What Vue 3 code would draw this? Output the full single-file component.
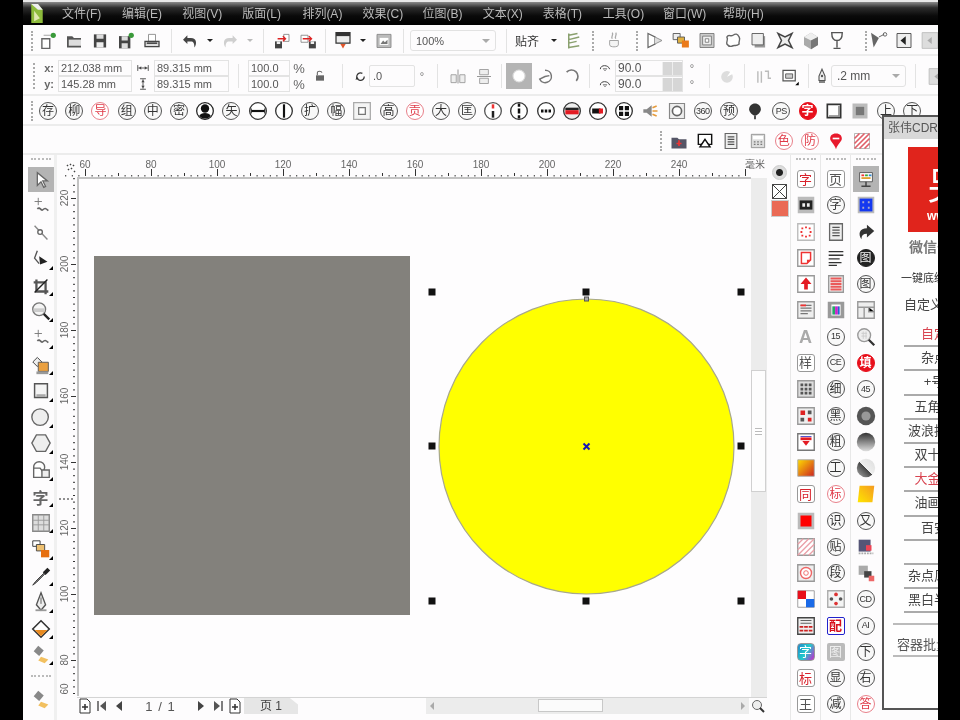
<script setup>
// menu and toolbars of the drawing program
const menus = ['文件(F)', '编辑(E)', '视图(V)', '版面(L)', '排列(A)', '效果(C)', '位图(B)', '文本(X)', '表格(T)', '工具(O)', '窗口(W)', '帮助(H)']

const svg = {
  new: '<path d="M5 10h9v11H5z" fill="#fff" stroke="#666" stroke-width="1.6"/><path d="M7 6h8" stroke="#999"/><circle cx="18" cy="6" r="3" fill="#3a9a3a"/>',
  open: '<path d="M4 7h6l2 2h8v11H4z" fill="#555"/><path d="M6 11h14v7H6z" fill="#ddd"/>',
  save: '<path d="M5 5h14v15H5z" fill="#444"/><path d="M8 5h8v5H8z" fill="#ddd"/><path d="M8 14h8v6H8z" fill="#eee"/>',
  saveas: '<path d="M4 7h13v14H4z" fill="#444"/><path d="M7 7h7v5H7zM7 15h7v6H7z" fill="#ddd"/><circle cx="18" cy="6" r="3" fill="#3a9a3a"/>',
  print: '<path d="M8 5h8v8H8z" fill="#fff" stroke="#888"/><path d="M4 13h16v6H4z" fill="#ddd" stroke="#444" stroke-width="1.5"/><path d="M6 15h12" stroke="#222" stroke-width="1.5"/>',
  undo: '<path d="M9 6 4 11l5 5v-3h4c3 0 4 2 4 7 3-4 3-11-4-11H9z" fill="#444"/>',
  redo: '<path d="M15 6l5 5-5 5v-3h-4c-3 0-4 2-4 7-3-4-3-11 4-11h4z" fill="#cfcfcf"/>',
  imp: '<path d="M4 13h8v8H4z" fill="#444"/><path d="M6 13h4v3H6z" fill="#eee"/><path d="M14 5h6v8h-6z" fill="#fff" stroke="#888"/><path d="M7 10h8M13 7l3 3-3 3" stroke="#d22" stroke-width="1.6" fill="none"/>',
  exp: '<path d="M4 6h8v8H4z" fill="#fff" stroke="#888"/><path d="M13 13h8v8h-8z" fill="#444"/><path d="M15 13h4v3h-4z" fill="#eee"/><path d="M6 10h9M13 7l3 3-3 3" stroke="#d22" stroke-width="1.6" fill="none"/>',
  pub: '<path d="M4 3h16v12H4z" fill="#eee" stroke="#333" stroke-width="1.4"/><path d="M4 3h16v4H4z" fill="#333"/><path d="M9 16h6l-3 5z" fill="#e2552a"/>',
  view: '<path d="M4 5h16v15H4z" fill="#bbb" stroke="#888"/><path d="M7 9h10v8H7z" fill="#fff"/><path d="M8 16l3-4 2 2 3-3v5z" fill="#777"/>',
  snap: '<path d="M6 4v17M6 6l10-2M6 11l12-3M6 15l9-2M6 20l12-2" stroke="#8aa06e" stroke-width="1.7" fill="none"/>',
  cup: '<path d="M7 12h10v5c0 3-10 3-10 0z" fill="#f4f4f4" stroke="#999"/><path d="M10 10c-2-3 2-4 0-7M14 10c-2-3 2-4 0-7" stroke="#aaa" stroke-width="1.5" fill="none"/>',
  blend: '<path d="M4 4l8 4v8l-8 4z" fill="#fff" stroke="#666" stroke-width="1.4"/><path d="M12 8l8 4-8 4" fill="#ddd" stroke="#888"/>',
  layers: '<path d="M3 4h8v7H3z" fill="#eee" stroke="#555"/><path d="M8 8h8v7H8z" fill="#e0b040" stroke="#555"/><path d="M13 12h8v8h-8z" fill="#ea7a1a"/>',
  contour: '<path d="M4 4h16v16H4z" fill="#ccc" stroke="#777"/><path d="M7 7h10v10H7z" fill="#eee" stroke="#777"/><path d="M10 10h4v4h-4z" fill="#fff" stroke="#777"/>',
  envelope: '<path d="M5 8c2-4 4 0 7-2s5-2 7 2c2 3-1 5 0 8-3 3-5 1-7 2s-5 1-7-2c-1-3 2-5 0-8z" fill="#fff" stroke="#666" stroke-width="1.6"/>',
  shadow: '<path d="M7 7h12v13H7z" fill="#999"/><path d="M4 4h13v13H4z" fill="#eee" stroke="#555"/>',
  distort: '<path d="M4 4l8 4 8-4-4 8 4 8-8-4-8 4 4-8z" fill="#eee" stroke="#444" stroke-width="1.7"/>',
  cube: '<path d="M12 3l8 5v9l-8 5-8-5V8z" fill="#aaa"/><path d="M12 3l8 5-8 4-8-4z" fill="#eee"/><path d="M12 12v10l8-5V8z" fill="#777"/>',
  glass: '<path d="M6 3h12c0 7-3 9-6 9s-6-2-6-9zM12 12v8M8 21h8" fill="#fff" stroke="#555" stroke-width="1.6"/>',
  lens: '<path d="M4 3l9 6-6 11z" fill="#666"/><circle cx="20" cy="5" r="2" fill="#fff" stroke="#555"/><path d="M13 8l6-3" stroke="#555"/>',
  panel: '<path d="M4 4h16v16H4z" fill="#eee" stroke="#444"/><path d="M14 7v10l-6-5z" fill="#222"/>',
  panel2: '<path d="M3 3h18v18H3z" fill="#ddd" stroke="#bbb"/><path d="M14 8v8l-5-4z" fill="#aaa"/>',
  hsize: '<path d="M3 7v10M21 7v10M4 12h16" stroke="#444" stroke-width="1.5"/><path d="M5 12l4-3v6zM19 12l-4-3v6z" fill="#444"/>',
  vsize: '<path d="M7 3h10M7 21h10M12 4v16" stroke="#444" stroke-width="1.5"/><path d="M12 5l-3 4h6zM12 19l-3-4h6z" fill="#444"/>',
  lock: '<path d="M6 11h12v8H6z" fill="#666"/><path d="M8 11V7c0-3 6-3 7 0" fill="none" stroke="#666" stroke-width="1.6"/>',
  rot: '<path d="M18 12a6 6 0 1 1-3-5" fill="none" stroke="#333" stroke-width="2"/><path d="M6 12l-2 5 5-1z" fill="#333"/>',
  mirrorh: '<path d="M12 4v16" stroke="#888"/><path d="M4 10h6v9H4zM14 10h6v9h-6z" fill="#eee" stroke="#999"/>',
  mirrorv: '<path d="M4 12h16" stroke="#888"/><path d="M7 4h10v6H7zM7 14h10v6H7z" fill="#eee" stroke="#999"/>',
  ell: '<circle cx="12" cy="12" r="5.5" fill="#fff" stroke="#ddd"/>',
  pie: '<path d="M12 5a7 7 0 1 1-6 10l6-3 5-1" fill="#fff" stroke="#777" stroke-width="1.7"/>',
  arc: '<path d="M7 17a7 7 0 0 1 10-11" transform="rotate(90 12 12)" fill="none" stroke="#777" stroke-width="1.9"/>',
  arcup: '<path d="M4 14c0-8 14-8 16 0" fill="none" stroke="#444" stroke-width="1.7"/><path d="M9 13l3 4 3-4z" fill="#fff" stroke="#444"/>',
  convert: '<circle cx="12" cy="13" r="7" fill="#ddd"/><path d="M12 13l8-4-2-5z" fill="#fff"/>',
  wrap: '<path d="M5 6v13M9 6v13M13 6h4v8h3" fill="none" stroke="#bbb" stroke-width="1.6"/>',
  frame: '<path d="M4 5h14v12H4z" fill="#fff" stroke="#555" stroke-width="1.4"/><path d="M7 9h8v5H7z" fill="#ccc" stroke="#555"/><path d="M18 22l4-4v4z" fill="#000"/>',
  pen: '<path d="M12 3l4 9v6H8v-6z" fill="#eee" stroke="#555" stroke-width="1.5"/><path d="M8 20h8" stroke="#333" stroke-width="1.6"/><circle cx="12" cy="12" r="1.6" fill="#555"/>',
  folderadd: '<path d="M3 8h7l2 2h9v11H3z" fill="#556"/><path d="M12 11v7M9 15h6" stroke="#e33" stroke-width="2"/>',
  tri: '<path d="M4 4h16v12h-4l-4-5-4 5H4z" fill="#fff" stroke="#111" stroke-width="1.7"/><path d="M12 10l6 9H6z" fill="#fff" stroke="#111" stroke-width="1.7"/>',
  lines: '<path d="M5 3h14v18H5z" fill="#eee" stroke="#666" stroke-width="1.4"/><path d="M8 7h8M8 10h8M8 13h8M8 16h8" stroke="#555" stroke-width="1.4"/>',
  calc: '<path d="M4 4h16v16H4z" fill="#ddd" stroke="#888"/><path d="M6 6h12v4H6z" fill="#fff"/><path d="M7 13h2M11 13h2M15 13h2M7 16h2M11 16h2M15 16h2" stroke="#777" stroke-width="1.6"/>',
  pin: '<path d="M12 3c-5 0-7 3-7 6 0 4 5 6 7 13 2-7 7-9 7-13 0-3-2-6-7-6z" fill="#e8192c"/><path d="M8 8h8v2H8z" fill="#fff"/>',
  hatch: '<path d="M3 3h18v18H3z" fill="#fff" stroke="#aaa"/><path d="M3 9l6-6M3 15L15 3M3 21 21 3M9 21 21 9M15 21l6-6" stroke="#e0606a" stroke-width="2"/>',
  balloon: '<path d="M12 3c-4 0-7 3-7 7s4 7 7 8c3-1 7-4 7-8s-3-7-7-7z" fill="#333"/><path d="M12 18v4" stroke="#333" stroke-width="2"/>',
  speaker: '<path d="M4 10h4l6-5v14l-6-5H4z" fill="#888"/><path d="M15 8l5-2M15 12h6M15 16l5 2" stroke="#e59a3a" stroke-width="2"/>',
  ringbox: '<path d="M3 3h18v18H3z" fill="#eee" stroke="#888" stroke-width="1.4"/><circle cx="12" cy="12" r="5.5" fill="#fff" stroke="#666" stroke-width="2"/>',
  sqframe: '<path d="M4 4h16v16H4z" fill="#fff" stroke="#333" stroke-width="2"/><path d="M18 6v12H6" fill="none" stroke="#888" stroke-width="2"/>',
  graysq: '<path d="M3 3h18v18H3z" fill="#bbb"/><path d="M7 7h10v10H7z" fill="#777"/>',
  man: '<circle cx="12" cy="12" r="10" fill="#fff" stroke="#222" stroke-width="1.5"/><circle cx="12" cy="9" r="5" fill="#111"/><path d="M5 18c2-5 12-5 14 0l-4 3H9z" fill="#111"/>',
  ringh: '<circle cx="12" cy="12" r="10" fill="#fff" stroke="#333" stroke-width="1.6"/><path d="M4 12h16" stroke="#111" stroke-width="2.6"/><path d="M4 9v6M20 9v6" stroke="#111" stroke-width="1"/>',
  ringv: '<circle cx="12" cy="12" r="10" fill="#fff" stroke="#333" stroke-width="1.6"/><path d="M12 4v16" stroke="#111" stroke-width="2.6"/>',
  ringred: '<circle cx="12" cy="12" r="10" fill="#fff" stroke="#555" stroke-width="1.6"/><path d="M12 4v5" stroke="#e33" stroke-width="3"/><path d="M12 12v8" stroke="#222" stroke-width="3"/>',
  ringbars: '<circle cx="12" cy="12" r="10" fill="#fff" stroke="#333" stroke-width="1.6"/><path d="M12 3v4M12 9v6M12 17v4" stroke="#111" stroke-width="3"/>',
  ringdots: '<circle cx="12" cy="12" r="10" fill="#fff" stroke="#333" stroke-width="1.6"/><path d="M6 12h3M10.500 12h3M15 12h3" stroke="#111" stroke-width="3.500"/>',
  ringbar: '<circle cx="12" cy="12" r="10" fill="#eee" stroke="#333" stroke-width="1.6"/><path d="M4 8h16v3H4z" fill="#222"/><path d="M4 11h16v5H4z" fill="#e31b23"/>',
  ringbox2: '<circle cx="12" cy="12" r="10" fill="#fff" stroke="#333" stroke-width="1.6"/><path d="M5 9h10v6H5z" fill="#111"/><path d="M13 9h5v6h-5z" fill="#e31b23"/>',
  ringfour: '<circle cx="12" cy="12" r="10" fill="#fff" stroke="#333" stroke-width="1.6"/><path d="M6 6h5v5H6zM13 6h5v5h-5zM6 13h5v5H6zM13 13h5v5h-5z" fill="#111"/>',
  square: '<path d="M2 2h20v20H2z" fill="#f4f4f4" stroke="#aaa" stroke-width="1.5"/><path d="M8 8h8v8H8z" fill="#fff" stroke="#777" stroke-width="1.5"/>',
  // right hand columns
  film: '<path d="M3 3h18v18H3z" fill="#bbb"/><path d="M5 7h14v10H5z" fill="#222"/><path d="M8 10h3v4H8zM13 10h3v4h-3z" fill="#eee"/>',
  dotsbox: '<path d="M3 3h18v18H3z" fill="#fff" stroke="#bbb" stroke-width="1.5"/><path d="M7 7h2v2H7zM11 6h2v2h-2zM15 7h2v2h-2zM6 11h2v2H6zM16 11h2v2h-2zM7 15h2v2H7zM11 16h2v2h-2zM15 15h2v2h-2z" fill="#e33"/>',
  note: '<path d="M3 3h18v18H3z" fill="#fff" stroke="#999" stroke-width="1.5"/><path d="M7 6h10v8l-4 4H7z" fill="#fff" stroke="#e33" stroke-width="1.6"/><path d="M13 18v-4h4z" fill="#e33"/>',
  upbox: '<path d="M3 3h18v18H3z" fill="#fff" stroke="#999" stroke-width="1.5"/><path d="M12 5l6 7h-4v6h-4v-6H6z" fill="#e31b23"/>',
  listbox: '<path d="M3 3h18v18H3z" fill="#eee" stroke="#999" stroke-width="1.5"/><path d="M6 7h12M6 10h12M6 13h12M6 16h8" stroke="#777" stroke-width="1.5"/><path d="M6 6h6v2H6z" fill="#e33"/>',
  redlist: '<path d="M4 3h16v18H4z" fill="#eee" stroke="#999" stroke-width="1.5"/><path d="M6 6h12M6 9h12M6 12h12M6 15h12M6 18h12" stroke="#ea5a5a" stroke-width="2"/>',
  grid9: '<path d="M3 3h18v18H3z" fill="#ddd" stroke="#999" stroke-width="1.5"/><path d="M6 6h3v3H6zM10.500 6h3v3h-3zM15 6h3v3h-3zM6 10.500h3v3H6zM10.500 10.500h3v3h-3zM15 10.500h3v3h-3zM6 15h3v3H6zM10.500 15h3v3h-3zM15 15h3v3h-3z" fill="#555"/>',
  reddots: '<path d="M3 3h18v18H3z" fill="#eee" stroke="#999" stroke-width="1.5"/><path d="M6 6h5v5H6zM14 14h4v4h-4z" fill="#d22"/><path d="M14 6h4v4h-4zM6 14h4v4H6z" fill="#555"/>',
  heart: '<path d="M3 3h18v18H3z" fill="#fff" stroke="#777" stroke-width="1.5"/><path d="M6 7h12v3H6z" fill="#e31b23"/><path d="M8 11h8l-4 5z" fill="#e31b23"/><path d="M6 6h12" stroke="#44c"/>',
  grad: '<defs><linearGradient id="g1" x1="0" y1="0" x2="1" y2="1"><stop offset="0" stop-color="#fd0"/><stop offset="1" stop-color="#c22"/></linearGradient></defs><path d="M3 3h18v18H3z" fill="url(#g1)" stroke="#aaa"/>',
  redsq: '<path d="M3 3h18v18H3z" fill="#bbb"/><path d="M6 6h12v12H6z" fill="#f00"/>',
  hatchbox: '<path d="M3 3h18v18H3z" fill="#fff" stroke="#999" stroke-width="1.5"/><path d="M3 9l6-6M3 15L15 3M3 21 21 3M9 21 21 9M15 21l6-6" stroke="#eaa0a8" stroke-width="1.5"/>',
  ringin: '<path d="M3 3h18v18H3z" fill="#eee" stroke="#999" stroke-width="1.5"/><circle cx="12" cy="12" r="6" fill="#fff" stroke="#e66" stroke-width="1.500"/><circle cx="12" cy="12" r="2.500" fill="#fff" stroke="#e66"/>',
  check: '<path d="M3 3h18v18H3z" fill="#fff" stroke="#999"/><path d="M3 3h9v9H3z" fill="#e8101c"/><path d="M12 12h9v9h-9z" fill="#1a6ae8"/>',
  redgrid: '<path d="M3 3h18v18H3z" fill="#eee" stroke="#444" stroke-width="1.5"/><path d="M6 6h12M6 9h12" stroke="#555"/><path d="M5 12h4v2H5zM10 12h4v2h-4zM15 12h4v2h-4zM5 16h4v2H5zM10 16h4v2h-4zM15 16h4v2h-4z" fill="#c22"/>',
  colorsq: '<path d="M3 3h18v18H3z" fill="#999"/><path d="M7 6h10v12H7z" fill="#fff"/><path d="M8 8h3v9H8z" fill="#2a6"/><path d="M11 8h3v9h-3z" fill="#c2c"/><path d="M14 8h2v9h-2z" fill="#26c"/>',
  paral: '<path d="M4 5h16M4 9h16M4 13h12M4 17h14M4 20h9" stroke="#333" stroke-width="1.4"/>',
  monitor: '<path d="M5 5h14v10H5z" fill="#fff" stroke="#555"/><path d="M7 7h3v2H7z" fill="#e33"/><path d="M11 7h3v2h-3z" fill="#3a3"/><path d="M15 7h3v2h-3z" fill="#38c"/><path d="M7 11h10" stroke="#e0a030" stroke-width="2"/><path d="M12 15v4M7 20h10" stroke="#444" stroke-width="1.6"/>',
  blue: '<path d="M3 3h18v18H3z" fill="#bbb"/><path d="M5 5h14v14H5z" fill="#1438f0"/><path d="M8 8h2v2H8zM14 8h2v2h-2zM8 14h2v2H8zM14 14h2v2h-2z" fill="#aac"/>',
  bigarrow: '<path d="M13 4l8 7-8 7v-4c-4 0-6 2-6 6-4-6-2-12 6-12z" fill="#333"/>',
  window: '<path d="M3 3h18v18H3z" fill="#eee" stroke="#999" stroke-width="1.5"/><path d="M3 9h18M10 9v12M15 9v5h6" stroke="#999" stroke-width="1.5"/>',
  mag: '<circle cx="10" cy="10" r="7" fill="#eee" stroke="#999" stroke-width="1.5"/><path d="M7 8h6M7 11h6M9 6v8M12 6v8" stroke="#ccc"/><path d="M15 15l6 6" stroke="#333" stroke-width="2.500"/>',
  ball1: '<circle cx="12" cy="12" r="10" fill="#555"/><circle cx="12" cy="12" r="5" fill="#999"/>',
  ball2: '<defs><linearGradient id="g2" x1="0" y1="0" x2="0" y2="1"><stop offset="0" stop-color="#333"/><stop offset="1" stop-color="#ddd"/></linearGradient></defs><circle cx="12" cy="12" r="10" fill="url(#g2)"/>',
  ball3: '<defs><linearGradient id="g3" x1="1" y1="0" x2="0" y2="1"><stop offset="0" stop-color="#ddd"/><stop offset=".5" stop-color="#eee"/><stop offset=".52" stop-color="#444"/><stop offset="1" stop-color="#aaa"/></linearGradient></defs><circle cx="12" cy="12" r="10" fill="url(#g3)"/>',
  orange: '<defs><linearGradient id="g4" x1="1" y1="0" x2="0" y2="1"><stop offset="0" stop-color="#f59a20"/><stop offset="1" stop-color="#ffe600"/></linearGradient></defs><path d="M5 3h16l-2 18H3z" fill="url(#g4)"/>',
  sq1: '<path d="M4 4h13v13H4z" fill="#557"/><path d="M12 10h6v6h-6z" fill="#e45"/><path d="M4 19h16" stroke="#aaa" stroke-dasharray="2 1" stroke-width="2"/>',
  sq2: '<path d="M4 4h10v10H4z" fill="#aaa"/><path d="M10 10h8v7h-8z" fill="#444"/><path d="M15 15h6v6h-6z" fill="#e66"/>',
  dotflower: '<path d="M3 3h18v18H3z" fill="#f4f4f4" stroke="#aaa" stroke-width="1.5"/><circle cx="12" cy="7" r="2" fill="#d33"/><circle cx="7" cy="12" r="2" fill="#555"/><circle cx="17" cy="12" r="2" fill="#555"/><circle cx="12" cy="17" r="2" fill="#d33"/>',
  // toolbox
  pick: '<path d="M8 4v14l4-4 3 6 2-1-3-6h5z" fill="#fff" stroke="#666" stroke-width="1.400"/>',
  free: '<path d="M9 2v8M5 6h8" stroke="#777"/><path d="M8 14c3-3 4 3 6 1s3-2 6 1" fill="none" stroke="#666" stroke-width="1.800"/>',
  shapet: '<path d="M5 4l14 15" stroke="#888" stroke-width="1.500"/><circle cx="11" cy="11" r="2.500" fill="#fff" stroke="#666" stroke-width="1.500"/>',
  smear: '<path d="M8 3l-3 8 5 6" fill="none" stroke="#555" stroke-width="1.500"/><path d="M10 9l9 6-8 3z" fill="#222"/>',
  crop: '<path d="M7 5v13h13M4 8h13v13" fill="none" stroke="#555" stroke-width="2.500"/><path d="M5 19L19 5" stroke="#222" stroke-width="1.500"/>',
  zoom: '<circle cx="10" cy="9" r="7" fill="#f4f4f4" stroke="#777" stroke-width="1.500"/><path d="M4 10h12" stroke="#ccc" stroke-width="4"/><path d="M15 14l6 6" stroke="#222" stroke-width="2.500"/>',
  smart: '<path d="M5 5h7v7H5z" fill="#eee" stroke="#444" transform="rotate(45 8 8)"/><path d="M9 9h11v10H9z" fill="#eaa040" stroke="#555"/><path d="M7 19h13v3H7z" fill="#999"/>',
  rect: '<path d="M5 4h14v15H5z" fill="#f4f4f4" stroke="#555" stroke-width="1.600"/><path d="M7 17h10" stroke="#aaa" stroke-width="3"/>',
  circ: '<circle cx="11" cy="11" r="9" fill="#eee" stroke="#666" stroke-width="1.500"/>',
  hex: '<path d="M7 3h10l5 9-5 9H7l-5-9z" transform="translate(0 -1)" fill="#eee" stroke="#666" stroke-width="1.500"/>',
  basic: '<circle cx="10" cy="9" r="6" fill="#fff" stroke="#666" stroke-width="1.500"/><path d="M4 10h7l3 4v6H4z" fill="#fff" stroke="#666" stroke-width="1.500"/><path d="M13 12h8v8h-8z" fill="#eee" stroke="#666" stroke-width="1.500"/>',
  table: '<path d="M3 3h18v18H3z" fill="#ddd" stroke="#888" stroke-width="1.500"/><path d="M3 9h18M3 14h18M9 3v18M15 3v18" stroke="#999"/>',
  swatch: '<path d="M3 2h8v6H3z" fill="#fff" stroke="#333"/><path d="M7 6h9v7H7z" fill="#eec070" stroke="#444"/><path d="M12 12h9v8h-9z" fill="#e66f10"/>',
  dropper: '<path d="M19 3l3 3-5 5-3-3z" fill="#222"/><path d="M15 9l-9 9-3 4 4-3 9-9z" fill="#888" stroke="#333"/>',
  nib: '<path d="M12 2l5 13-5 6-5-6z" fill="#eee" stroke="#555" stroke-width="1.500"/><path d="M12 7v7" stroke="#555"/><path d="M6 21h12" stroke="#999" stroke-width="2"/>',
  fill: '<path d="M12 3l9 9-9 9-9-9z" fill="#fff" stroke="#333" stroke-width="1.700"/><path d="M5 13h14l-7 7z" fill="#e88a20"/>',
  ifill: '<path d="M9 2l6 5-5 6-6-5z" fill="#888"/><path d="M12 14l8 3-4 4-7-3z" fill="#f2c060"/>',
  bar: '<path d="M4 16h16v6H4z" fill="#ccc"/><path d="M6 18h12" stroke="#555"/>',
}

// s: plain ring, r: red ring, d: dark disc, e: red disc, b: box, q: red box, i: svg icon
function parse(item) {
  const [k, t] = item.split(':')
  return k === 'i' ? { k, icon: svg[t] } : { k, t }
}
const list = (s) => s.split(' ').map(parse)

const row1a = list('i:open i:save i:saveas i:print')
const row3 = list('s:存 s:柳 r:导 s:组 s:中 s:密 i:man s:矢 i:ringh i:ringv s:扩 s:幅 i:square s:高 r:贡 s:大 s:匡 i:ringred i:ringbars i:ringdots i:ringbar i:ringbox2 i:ringfour i:speaker i:ringbox s:360 s:预 i:balloon s:PS e:字 i:sqframe i:graysq s:上 s:下')
const row4 = list('i:folderadd i:tri i:lines i:calc r:色 r:防 i:pin i:hatch')
const tools = ['pick', 'free', 'shapet', 'smear', 'crop', 'zoom', 'free', 'smart', 'rect', 'circ', 'hex', 'basic', 'T', 'table', 'swatch', 'dropper', 'nib', 'fill', 'ifill'].map((n) => ({ n, icon: svg[n] }))
const col1 = list('q:字 i:film i:dotsbox i:note i:upbox i:listbox a:A b:样 i:grid9 i:reddots i:heart i:grad q:同 i:redsq i:hatchbox i:ringin i:check i:redgrid c:字 q:标 b:王')
const col2 = list('b:页 s:字 i:lines i:paral i:redlist i:colorsq s:15 s:CE s:细 s:黑 s:粗 s:工 r:标 s:识 s:贴 s:段 i:dotflower m:配 g:图 s:显 s:减')
const col3 = list('i:monitor i:blue i:bigarrow d:图 s:图 i:window i:mag e:填 s:45 i:ball1 i:ball2 i:ball3 i:orange s:又 i:sq1 i:sq2 s:CD s:AI s:下 s:右 r:答')

// rulers, 3.3px per mm
const hTicks = []
for (let mm = 54; mm <= 260; mm += 2) hTicks.push({ x: 28 + (mm - 60) * 3.3, mm })
const hLabels = [60, 80, 100, 120, 140, 160, 180, 200, 220, 240]
const vTicks = []
for (let mm = 226; mm >= 62; mm -= 2) vTicks.push({ y: 20 + (220 - mm) * 3.3, mm })
const vLabels = [220, 200, 180, 160, 140, 120, 100, 80]

const handles = [[355, 115], [509, 115], [664, 115], [355, 269], [664, 269], [355, 424], [509, 424], [664, 424]]

const textures = [
  { t: '自定纹理', red: true }, { t: '杂点底纹' }, { t: '+号底纹' }, { t: '五角星底纹' }, { t: '波浪扭曲底纹' }, { t: '双十字底纹' },
  { t: '大金属底纹', red: true }, { t: '油画笔触纹' }, { t: '百安居纹' }, { t: '' }, { t: '杂点风格底纹' }, { t: '黑白半调底纹' },
]
</script>

<template>
  <div class="app">
    <div class="menubar">
      <svg class="logo" viewBox="0 0 14 22"><path d="M1 1h7l5 6v14H1z" fill="#8dbb3c" /><path d="M1 1h7l5 6H8z" fill="#eee" /><path d="M4 8l6 8-6 3z" fill="#dfe8b0" /></svg>
      <span v-for="m in menus" :key="m" class="menu">{{ m }}</span>
    </div>

    <div class="bar row1">
      <span class="grip"></span>
      <svg class="ic" viewBox="0 0 24 24" v-html="svg.new"></svg>
      <svg v-for="(it, i) in row1a" :key="i" class="ic" viewBox="0 0 24 24" v-html="it.icon"></svg>
      <span class="sep w2"></span>
      <svg class="ic" viewBox="0 0 24 24" v-html="svg.undo"></svg><span class="dd"></span>
      <svg class="ic" viewBox="0 0 24 24" v-html="svg.redo"></svg><span class="dd off"></span>
      <span class="sep w2"></span>
      <svg class="ic" viewBox="0 0 24 24" v-html="svg.imp"></svg>
      <svg class="ic" viewBox="0 0 24 24" v-html="svg.exp"></svg>
      <span class="sep n1"></span>
      <svg class="ic" viewBox="0 0 24 24" v-html="svg.pub"></svg><span class="dd w1"></span>
      <svg class="ic" viewBox="0 0 24 24" v-html="svg.view"></svg>
      <span class="sep w3"></span>
      <div class="combo zoomlevel"><span>100%</span><i class="caret"></i></div>
      <span class="sep w11"></span>
      <span class="snap">贴齐</span><span class="dd"></span>
      <svg class="ic" viewBox="0 0 24 24" v-html="svg.snap"></svg>
      <span class="grip g2"></span>
      <svg class="ic" viewBox="0 0 24 24" v-html="svg.cup"></svg>
      <span class="grip g3"></span>
      <svg v-for="n in ['blend','layers','contour','envelope','shadow','distort','cube','glass']" :key="n" class="ic" viewBox="0 0 24 24" v-html="svg[n]"></svg>
      <span class="grip g4"></span>
      <svg class="ic" viewBox="0 0 24 24" v-html="svg.lens"></svg>
      <svg class="ic" viewBox="0 0 24 24" v-html="svg.panel"></svg>
      <svg class="ic" viewBox="0 0 24 24" v-html="svg.panel2"></svg>
    </div>

    <div class="bar row2">
      <span class="grip tall"></span>
      <div class="stack labels"><b>x:</b><b>y:</b></div>
      <div class="stack inputs w74"><span>212.038 mm</span><span>145.28 mm</span></div>
      <div class="stack sizeic">
        <svg viewBox="0 0 24 24" v-html="svg.hsize"></svg>
        <svg viewBox="0 0 24 24" v-html="svg.vsize"></svg>
      </div>
      <div class="stack inputs w75"><span>89.315 mm</span><span>89.315 mm</span></div>
      <span class="sep s19"></span>
      <div class="stack inputs w42"><span>100.0</span><span>100.0</span></div>
      <div class="stack pct"><span>%</span><span>%</span></div>
      <svg class="ic w24" viewBox="0 0 24 24" v-html="svg.lock"></svg>
      <span class="sep s20"></span>
      <svg class="ic w17" viewBox="0 0 24 24" v-html="svg.rot"></svg>
      <div class="field w46">.0</div>
      <span class="deg">°</span>
      <span class="sep s16"></span>
      <svg class="ic" viewBox="0 0 24 24" v-html="svg.mirrorh"></svg>
      <svg class="ic" viewBox="0 0 24 24" v-html="svg.mirrorv"></svg>
      <span class="sep s9"></span>
      <svg class="ic active" viewBox="0 0 24 24" v-html="svg.ell"></svg>
      <svg class="ic" viewBox="0 0 24 24" v-html="svg.pie"></svg>
      <svg class="ic" viewBox="0 0 24 24" v-html="svg.arc"></svg>
      <span class="sep s10"></span>
      <div class="stack sizeic w21">
        <svg viewBox="0 0 24 24" v-html="svg.arcup"></svg>
        <svg viewBox="0 0 24 24" v-html="svg.arcup"></svg>
      </div>
      <div class="stack inputs w68">
        <span class="spin">90.0<i></i><i></i></span>
        <span class="spin">90.0<i></i><i></i></span>
      </div>
      <div class="stack degs"><span>°</span><span>°</span></div>
      <span class="sep s16"></span>
      <svg class="ic w20" viewBox="0 0 24 24" v-html="svg.convert"></svg>
      <span class="sep s11"></span>
      <svg class="ic" viewBox="0 0 24 24" v-html="svg.wrap"></svg>
      <svg class="ic" viewBox="0 0 24 24" v-html="svg.frame"></svg>
      <span class="sep s12"></span>
      <svg class="ic w18" viewBox="0 0 24 24" v-html="svg.pen"></svg>
      <div class="combo outline"><span>.2 mm</span><i class="caret"></i></div>
      <span class="sep s18"></span>
      <svg class="ic" viewBox="0 0 24 24" v-html="svg.panel2"></svg>
    </div>

    <div class="bar row3">
      <span class="grip"></span>
      <div v-for="(it, i) in row3" :key="i" class="cell">
        <svg v-if="it.k === 'i'" viewBox="0 0 24 24" v-html="it.icon"></svg>
        <span v-else class="stamp" :class="[it.k, { small: it.t.length > 1 }]">{{ it.t }}</span>
      </div>
    </div>

    <div class="bar row4">
      <span class="grip"></span>
      <div v-for="(it, i) in row4" :key="i" class="cell">
        <svg v-if="it.k === 'i'" viewBox="0 0 24 24" v-html="it.icon"></svg>
        <span v-else class="stamp" :class="it.k">{{ it.t }}</span>
      </div>
    </div>

    <div class="workspace">
      <div class="toolbox">
        <span class="hgrip first"></span>
        <div v-for="(t, i) in tools" :key="i" class="tool" :class="{ active: i === 0 }">
          <span v-if="t.n === 'T'" class="tchar">字</span>
          <svg v-else viewBox="0 0 24 24" v-html="t.icon"></svg>
          <i v-if="i > 2" class="corner"></i>
        </div>
        <span class="hgrip low"></span>
        <div class="tool"><svg viewBox="0 0 24 24" v-html="svg.ifill"></svg></div>
        <div class="tool"><svg viewBox="0 0 24 24" v-html="svg.bar"></svg></div>
      </div>

      <div class="main">
        <svg class="hruler" width="710" height="23">
          <path d="M10 10l1 1M13 9l1 1M16 10l1 1M11 14l1 1M14 13l1 1M17 16l1 1" stroke="#444" stroke-width="1.5" />
          <rect v-for="t in hTicks" :key="t.mm" :x="t.x" :y="t.mm % 20 === 0 ? 14 : t.mm % 10 === 0 ? 18 : 20" width="1" :height="t.mm % 20 === 0 ? 7 : t.mm % 10 === 0 ? 3 : 1.5" fill="#333" />
          <text v-for="l in hLabels" :key="l" :x="28 + (l - 60) * 3.3" y="13" class="rl" text-anchor="middle">{{ l }}</text>
          <text x="708" y="13" class="rl" text-anchor="end">毫米</text>
        </svg>
        <div class="middle">
          <svg class="vruler" width="20" height="519">
            <rect v-for="t in vTicks" :key="t.mm" :x="t.mm % 20 === 0 ? 14 : 16" :y="t.y" :width="t.mm % 20 === 0 ? 5 : 2" height="1" fill="#333" />
            <text v-for="l in vLabels" :key="l" class="rl" text-anchor="middle" :transform="`translate(11 ${20 + (220 - l) * 3.3}) rotate(-90)`">{{ l }}</text>
            <text class="rl" text-anchor="middle" transform="translate(11 511) rotate(-90)">60</text>
            <path d="M2 321h16" stroke="#222" stroke-dasharray="2 2" />
          </svg>
          <svg class="paper" width="674" height="519">
            <g transform="translate(-2 -2)">
              <rect x="17" y="79" width="316" height="359" fill="#83817c" />
              <circle cx="509.500" cy="269.500" r="147.500" fill="#ffff00" stroke="#a8a88c" stroke-width="1.200" />
              <rect v-for="(h, i) in handles" :key="i" :x="h[0] - 3.500" :y="h[1] - 3.500" width="7" height="7" fill="#111" />
              <rect x="507.500" y="120" width="4" height="4" fill="#aaa" stroke="#555" />
              <path d="M506.500 266.500l6 6M512.500 266.500l-6 6" stroke="#1a1ab4" stroke-width="2" />
            </g>
          </svg>
          <div class="vscroll">
            <div class="thumb"><i></i></div>
          </div>
        </div>
        <div class="statusbar">
          <svg class="navic" viewBox="0 0 16 16"><path d="M3 1h7l3 3v11H3z" fill="#fff" stroke="#333" /><path d="M8 6v6M5 9h6" stroke="#333" stroke-width="1.500" /></svg>
          <svg class="navic" viewBox="0 0 16 16"><path d="M4 3v10" stroke="#555" stroke-width="1.500" /><path d="M12 3v10L6 8z" fill="#555" /></svg>
          <svg class="navic" viewBox="0 0 16 16"><path d="M11 3v10L5 8z" fill="#444" /></svg>
          <span class="pages">1 / 1</span>
          <svg class="navic" viewBox="0 0 16 16"><path d="M5 3v10l6-5z" fill="#444" /></svg>
          <svg class="navic" viewBox="0 0 16 16"><path d="M12 3v10" stroke="#555" stroke-width="1.500" /><path d="M4 3v10l6-5z" fill="#555" /></svg>
          <svg class="navic" viewBox="0 0 16 16"><path d="M3 1h7l3 3v11H3z" fill="#fff" stroke="#333" /><path d="M8 6v6M5 9h6" stroke="#333" stroke-width="1.500" /></svg>
          <span class="pagetab">页 1</span>
          <div class="hscroll">
            <i class="arr l"></i>
            <div class="track"><div class="hthumb"></div></div>
            <i class="arr r"></i>
          </div>
          <svg class="navic mg" viewBox="0 0 16 16"><circle cx="7" cy="7" r="4.500" fill="#eee" stroke="#666" /><path d="M10 10l4 4" stroke="#333" stroke-width="2" /></svg>
        </div>
      </div>

      <div class="palette">
        <div class="play"></div>
        <svg class="none" viewBox="0 0 16 16"><path d="M.5.5h15v15H.5zM.5.5l15 15M15.500.5l-15 15" fill="#fff" stroke="#333" /></svg>
        <div class="swatch"></div>
      </div>

      <div v-for="(col, c) in [col1, col2, col3]" :key="c" class="dockcol">
        <span class="hgrip"></span>
        <div v-for="(it, i) in col" :key="i" class="dcell" :class="{ active: c === 2 && i === 0 }">
          <svg v-if="it.k === 'i'" viewBox="0 0 24 24" v-html="it.icon"></svg>
          <span v-else class="stamp" :class="[it.k, { small: it.t.length > 1 }]">{{ it.t }}</span>
        </div>
      </div>
    </div>

    <div class="docker">
      <div class="dtitle">张伟CDR插件</div>
      <div class="redlogo"><b>另</b><small>www</small></div>
      <div class="wechat">微信号</div>
      <div class="panel">
        <div class="tab">一键底纹</div>
        <div class="custom">自定义</div>
        <div class="btns">
          <div v-for="(b, i) in textures" :key="i" class="tbtn" :class="{ red: b.red }">{{ b.t }}</div>
        </div>
      </div>
      <div class="batch">容器批量</div>
    </div>
  </div>
</template>

<style>
html, body {
  margin: 0;
  background: #000;
}
</style>

<style scoped>
.app {
  position: relative;
  width: 915px;
  height: 720px;
  margin-left: 23px;
  overflow: hidden;
  background: #fdfcfd;
  font-family: "Liberation Sans", "Noto Sans CJK SC", sans-serif;
  color: #444;
  filter: blur(0.45px);
  border-top: 2px solid #e8e8e8;
  box-sizing: border-box;
}

.menubar {
  height: 23px;
  display: flex;
  align-items: center;
  padding-left: 7px;
  padding-bottom: 3px;
  box-sizing: border-box;
  background: linear-gradient(#8a8a8a 0, #2c2c2c 25%, #0a0a0a 60%, #000);
}
.logo {
  width: 14px;
  height: 21px;
  margin: 3px 18px 0 0;
}
.menu {
  width: 60.100px;
  flex: none;
  font-size: 12px;
  color: #b9b9b9;
  white-space: nowrap;
}

.bar {
  display: flex;
  align-items: center;
  padding-left: 3px;
  padding-top: 2px;
  border-bottom: 2px solid #ececec;
  box-sizing: border-box;
  overflow: hidden;
}
.row1 { height: 31px; }
.row2 { height: 40px; }
.row3 { height: 30px; }
.row4 { height: 29px; padding-left: 637px; }

.grip {
  width: 9px;
  height: 20px;
  flex: none;
  box-sizing: border-box;
  border-left: 2px dotted #aaa;
  margin-left: 5px;
  margin-right: -5px;
}
.grip.tall { width: 12px; height: 26px; margin-left: 7px; margin-right: -7px; }
.grip.g2 { margin-left: 5px; margin-right: 0; }
.grip.g3 { margin-left: 9px; margin-right: -3px; }
.grip.g4 { margin-left: 15px; margin-right: -9px; }
.row4 .grip { width: 6px; margin-left: 0; margin-right: 0; }

.ic {
  width: 21px;
  height: 21px;
  padding: 0 2.500px;
  flex: none;
}
.ic.w24 { width: 16px; height: 16px; padding: 0 4px; }
.ic.w17 { width: 15px; height: 15px; padding: 0 1px; }
.ic.w20 { width: 20px; height: 20px; padding: 0; }
.ic.w18 { width: 18px; height: 18px; padding: 0; }
.ic.active {
  background: #b4b4b4;
  width: 26px;
  height: 26px;
  padding: 0;
}

.sep {
  width: 1px;
  height: 24px;
  flex: none;
  margin: 0 4.500px;
  background: #e3e3e3;
}
.sep.w2 { margin: 0 5.500px; }
.sep.n1 { margin: 0 4px; }
.sep.w3 { margin: 0 6px; }
.sep.w11 { margin: 0 10px; }
.s19 { margin: 0 9px; }
.s20 { margin: 0 9.500px; }
.s16 { margin: 0 7.500px; }
.s9 { margin: 0 4px; }
.s10 { margin: 0 4.500px; }
.s11 { margin: 0 6.500px; }
.s12 { margin: 0 4.500px; }
.s18 { margin: 0 8.500px; }

.dd {
  width: 14px;
  height: 24px;
  flex: none;
  position: relative;
}
.dd.w1 { width: 15px; }
.dd::after {
  content: "";
  position: absolute;
  left: 4px;
  top: 10px;
  border: 3px solid transparent;
  border-top-color: #222;
}
.dd.off::after { border-top-color: #bbb; }

.combo {
  display: flex;
  align-items: center;
  justify-content: space-between;
  box-sizing: border-box;
  height: 21px;
  padding: 0 5px;
  flex: none;
  border: 1px solid #e2e2e2;
  border-radius: 3px;
  font-size: 11px;
  color: #555;
}
.zoomlevel { width: 86px; }
.outline { width: 75px; height: 22px; font-size: 12px; }
.caret {
  border: 4px solid transparent;
  border-top-color: #aaa;
  margin-top: 4px;
}
.snap {
  width: 32px;
  flex: none;
  font-size: 12px;
  color: #333;
  margin-left: -2px;
}

.stack {
  display: flex;
  flex-direction: column;
  flex: none;
  height: 32px;
  justify-content: space-around;
  font-size: 12px;
}
.labels { width: 20px; text-align: right; padding-right: 4px; box-sizing: border-box; }
.labels b { color: #666; font-size: 11px; font-weight: 700; line-height: 15px; }
.inputs span {
  height: 16px;
  box-sizing: border-box;
  border: 1px solid #e3e3e3;
  line-height: 14px;
  padding-left: 2px;
  font-size: 11px;
  color: #555;
  white-space: nowrap;
}
.w74 { width: 74px; }
.w75 { width: 75px; }
.w42 { width: 42px; }
.w68 { width: 68px; }
.sizeic { width: 22px; align-items: center; }
.sizeic.w21 { width: 21px; }
.sizeic svg { width: 14px; height: 14px; }
.pct { width: 18px; text-align: center; font-size: 13px; color: #666; }
.degs { width: 18px; text-align: center; font-size: 11px; color: #777; }
.field {
  box-sizing: border-box;
  width: 46px;
  height: 22px;
  border: 1px solid #e3e3e3;
  border-radius: 2px;
  flex: none;
  font-size: 11px;
  line-height: 20px;
  padding-left: 3px;
  color: #555;
}
.deg { width: 14px; flex: none; text-align: center; font-size: 11px; color: #777; }
.spin { display: flex; align-items: center; }
.inputs .spin { font-size: 12px; }
.spin i {
  width: 9px;
  height: 13px;
  background: #d6d6d6;
  border-left: 1px solid #eee;
}
.spin i:first-of-type { margin-left: auto; }

.cell, .dcell {
  display: flex;
  align-items: center;
  justify-content: center;
  flex: none;
}
.cell {
  width: 26.200px;
  height: 26px;
}
.cell svg { width: 20px; height: 20px; }
.dcell svg { width: 22px; height: 22px; }
.stamp {
  box-sizing: border-box;
  width: 18px;
  height: 18px;
  display: flex;
  align-items: center;
  justify-content: center;
  border: 1.300px solid #555;
  border-radius: 50%;
  font-size: 12px;
  line-height: 1;
  color: #333;
  background: #f8f8f8;
  overflow: hidden;
  white-space: nowrap;
}
.stamp.small { font-size: 9px; letter-spacing: -0.5px; }
.stamp.r { color: #e03a48; border-color: #e8808a; background: #fff; }
.stamp.d { color: #eee; background: #222; border-color: #222; }
.stamp.e { color: #fff; background: #e8101c; border-color: #e8101c; font-weight: 700; }
.stamp.b { border-radius: 3px; border-color: #999; color: #555; font-size: 13px; background: #fff; }
.stamp.q { border-radius: 3px; border-color: #999; color: #d8222c; font-size: 13px; background: #fff; }
.stamp.a { border: 0; background: none; color: #aaa; font-size: 18px; font-weight: 700; }
.stamp.c { border-radius: 4px; border-color: #999; background: linear-gradient(120deg, #28c, #2cc, #c2c); color: #fff; font-size: 13px; }
.stamp.m { border-radius: 2px; border: 1.500px solid #22c; color: #d8101c; font-size: 13px; font-weight: 700; background: #fff; }
.stamp.g { border-radius: 2px; border: 0; background: #bbb; color: #eee; font-size: 13px; }

.workspace {
  height: 565px;
  display: flex;
  align-items: flex-start;
}
.toolbox {
  width: 27px;
  margin-left: 4px;
  flex: none;
  height: 100%;
  display: flex;
  flex-direction: column;
  align-items: center;
  border-right: 3px solid #f0f0f0;
}
.hgrip {
  display: block;
  width: 20px;
  height: 5px;
  margin-top: 3px;
  margin-bottom: 3px;
  border-top: 2px dotted #bbb;
  box-sizing: border-box;
  flex: none;
}
.hgrip.first { margin-bottom: 4px; }
.hgrip.low { margin: 7px 0 6px; }
.tool {
  position: relative;
  width: 26px;
  height: 26.400px;
  flex: none;
  display: flex;
  align-items: center;
  justify-content: center;
}
.tool svg { width: 22px; height: 22px; }
.tool.active { background: #b4b4b4; height: 25px; margin-bottom: 1.400px; }
.tchar { font-size: 16px; font-weight: 700; color: #666; }
.corner {
  position: absolute;
  right: 1px;
  bottom: 3px;
  border: 2.500px solid transparent;
  border-right-color: #000;
  border-bottom-color: #000;
}

.main {
  width: 710px;
  flex: none;
}
.hruler { display: block; }
.rl {
  font-size: 10px;
  font-family: "Liberation Sans", "Noto Sans CJK SC", sans-serif;
  fill: #666;
}
.middle {
  display: flex;
  height: 519px;
}
.vruler { flex: none; }
.paper {
  flex: none;
  width: 674px;
  background: #fefdfe;
  border-left: 2px solid #c2c2c2;
  border-top: 2px solid #c2c2c2;
  margin-top: -1px;
  box-sizing: border-box;
}
.vscroll {
  width: 16px;
  flex: none;
  background: #ececec;
  position: relative;
}
.thumb {
  position: absolute;
  left: 0;
  right: 1px;
  top: 192px;
  height: 122px;
  background: #fdfdfd;
  border: 1px solid #d0d0d0;
  box-sizing: border-box;
  display: flex;
  align-items: center;
  justify-content: center;
}
.thumb i {
  width: 7px;
  height: 7px;
  background: repeating-linear-gradient(#bbb 0 1px, #fff 1px 3px);
}

.statusbar {
  height: 17px;
  display: flex;
  align-items: center;
  border-top: 1px solid #d4d4d4;
  box-sizing: border-box;
  margin-left: 20px;
}
.navic {
  width: 16px;
  height: 16px;
  flex: none;
  margin-right: 1px;
}
.navic.mg { margin-left: auto; }
.pages {
  width: 65px;
  flex: none;
  text-align: center;
  font-size: 13px;
  letter-spacing: 1px;
  color: #555;
}
.pagetab {
  width: 54px;
  height: 16px;
  flex: none;
  text-align: center;
  line-height: 16px;
  font-size: 12px;
  color: #444;
  background: #e6e6e6;
  clip-path: polygon(0 0, 85% 0, 100% 40%, 100% 100%, 0 100%);
}
.hscroll {
  width: 323px;
  margin-left: 128px;
  flex: none;
  display: flex;
  align-items: center;
  height: 16px;
  background: #ececec;
}
.track {
  flex: 1;
  position: relative;
  height: 16px;
}
.hthumb {
  position: absolute;
  left: 104px;
  top: 1px;
  width: 65px;
  height: 13px;
  background: #fbfbfb;
  border: 1px solid #c8c8c8;
  box-sizing: border-box;
}
.arr {
  width: 0;
  height: 0;
  border: 4px solid transparent;
  flex: none;
}
.arr.l { border-right-color: #aaa; }
.arr.r { border-left-color: #aaa; }

.palette {
  width: 23px;
  flex: none;
  display: flex;
  flex-direction: column;
  align-items: center;
  padding: 10px 0 0 2px;
  box-sizing: border-box;
}
.play {
  width: 15px;
  height: 15px;
  border-radius: 50%;
  background: radial-gradient(circle, #222 0 3px, #ddd 4px);
  border: 1px solid #ccc;
  box-sizing: border-box;
}
.none {
  width: 15px;
  height: 15px;
  margin-top: 4px;
}
.swatch {
  width: 18px;
  height: 17px;
  margin-top: 1px;
  background: #ea6a55;
  border: 1px solid #ccc;
  box-sizing: border-box;
}

.dockcol {
  width: 30px;
  height: 100%;
  flex: none;
  display: flex;
  flex-direction: column;
  align-items: center;
  border-left: 1px solid #e8e8e8;
  box-sizing: border-box;
}
.dcell {
  width: 26px;
  height: 26.270px;
}
.dcell.active { background: #b4b4b4; }

.docker {
  position: absolute;
  left: 859px;
  top: 113px;
  width: 100px;
  height: 595px;
  background: #fefefe;
  border: 2px solid #555;
  box-sizing: border-box;
}
.dtitle {
  height: 22px;
  padding-left: 4px;
  background: #d8d8d8;
  font-size: 12px;
  line-height: 22px;
  color: #555;
  white-space: nowrap;
}
.redlogo {
  position: relative;
  width: 90px;
  height: 85px;
  margin: 8px 0 0 24px;
  background: #e0241c;
  color: #fff;
  overflow: hidden;
}
.redlogo b {
  position: absolute;
  left: 19px;
  top: 20px;
  font-size: 38px;
  font-weight: 400;
  line-height: 1;
}
.redlogo small {
  position: absolute;
  left: 19px;
  top: 62px;
  font-size: 12px;
  font-weight: 700;
}
.wechat {
  margin: 6px 0 0 25px;
  font-size: 14px;
  font-weight: 700;
  line-height: 18px;
  color: #777;
}
.panel {
  margin: 14px 0 0 9px;
  width: 120px;
  height: 355px;
  border-bottom: 2px solid #bbb;
  box-sizing: border-box;
  position: relative;
}
.tab {
  font-size: 11px;
  padding-left: 8px;
  line-height: 16px;
  color: #333;
  white-space: nowrap;
}
.custom {
  margin-top: 10px;
  padding-left: 11px;
  font-size: 13px;
  line-height: 18px;
  color: #444;
}
.btns {
  margin: 9px 0 0 11px;
  width: 86px;
}
.tbtn {
  height: 24.200px;
  line-height: 22px;
  box-sizing: border-box;
  border-bottom: 2px solid #aaa;
  text-align: center;
  font-size: 13px;
  color: #444;
  white-space: nowrap;
}
.tbtn.red { color: #d84450; }
.batch {
  margin: 9px 0 0 9px;
  width: 110px;
  height: 23px;
  line-height: 22px;
  box-sizing: border-box;
  border-bottom: 2px solid #bbb;
  padding-left: 4px;
  font-size: 13px;
  color: #555;
  white-space: nowrap;
}
</style>
